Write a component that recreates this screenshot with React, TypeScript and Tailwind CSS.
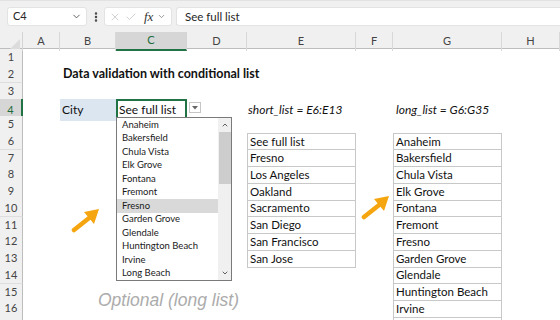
import { ChevronDown, ChevronUp, EllipsisVertical, X, Check } from "lucide-react";

const shortList = [
  "See full list",
  "Fresno",
  "Los Angeles",
  "Oakland",
  "Sacramento",
  "San Diego",
  "San Francisco",
  "San Jose",
];

// only rows 6..16 are fully visible, row 17 is cut by the window
const longList = [
  "Anaheim",
  "Bakersfield",
  "Chula Vista",
  "Elk Grove",
  "Fontana",
  "Fremont",
  "Fresno",
  "Garden Grove",
  "Glendale",
  "Huntington Beach",
  "Irvine",
  "",
];

const dropItems = [
  "Anaheim",
  "Bakersfield",
  "Chula Vista",
  "Elk Grove",
  "Fontana",
  "Fremont",
  "Fresno",
  "Garden Grove",
  "Glendale",
  "Huntington Beach",
  "Irvine",
  "Long Beach",
];

const columns = ["A", "B", "C", "D", "E", "F", "G", "H"];
const gridCols = "grid grid-cols-[23px_37px_56px_71px_60px_109px_37px_109px_1fr]";

function Toolbar() {
  return (
    <div className="h-[32px] bg-[#f0f0f0] border-t border-[#e2e2e2] flex items-center pl-[7px] text-[11px] text-[#262626]">
      <div className="w-[80px] h-[19px] bg-white rounded-[3px] border border-[#e3e3e3] flex items-center justify-between pl-[5px] pr-[4px]">
        <span>C4</span>
        <ChevronDown className="w-[11px] h-[11px] text-[#555]" strokeWidth={2} />
      </div>
      <div className="w-[17px] flex justify-center">
        <EllipsisVertical className="w-[12px] h-[12px] text-[#444]" strokeWidth={3} />
      </div>
      <div className="w-[68px] h-[19px] bg-white rounded-[3px] border border-[#e3e3e3] flex items-center pl-[4px] gap-[4px]">
        <X className="w-[12px] h-[12px] text-[#c2c2c2]" strokeWidth={1.5} />
        <Check className="w-[12px] h-[12px] text-[#c2c2c2]" strokeWidth={1.5} />
        <span className="ml-[3px] text-[13px] italic text-[#333] [font-family:'Liberation_Serif',serif] leading-none">
          fx
        </span>
        <ChevronDown className="w-[9px] h-[9px] text-[#777]" strokeWidth={2} />
      </div>
      <div className="ml-[4px] flex-1 h-[19px] bg-white rounded-l-[3px] border border-r-0 border-[#e3e3e3] flex items-center pl-[8px] text-[11.5px]">
        See full list
      </div>
    </div>
  );
}

function ColumnHeader() {
  return (
    <div className={`${gridCols} h-[17px] bg-[#f0f0f0] border-b border-[#bdbdbd] text-[11px] text-[#444]`}>
      <div className="relative border-r border-[#d4d4d4]">
        <svg className="absolute right-[2px] bottom-[2px]" width="10" height="10" viewBox="0 0 10 10">
          <polygon points="10,0 10,10 0,10" fill="#dcdcdc" />
        </svg>
      </div>
      {columns.map((c) =>
        c === "C" ? (
          <div
            key={c}
            className="bg-[#d6d6d6] border-b-2 border-[#217346] text-[#1d6b3c] flex items-center justify-center border-r border-r-[#d4d4d4]"
          >
            {c}
          </div>
        ) : (
          <div key={c} className="flex items-center justify-center border-r border-[#d8d8d8]">
            {c}
          </div>
        )
      )}
    </div>
  );
}

function boxCell(text: string | undefined, first: boolean) {
  if (text === undefined) return <div />;
  return (
    <div
      className={`border-x border-b border-[#c8c8c8] ${first ? "border-t" : ""} pl-[2px] flex items-center text-[11.5px] text-[#111] leading-none whitespace-nowrap overflow-hidden`}
    >
      {text}
    </div>
  );
}

function SheetRow({ n }: { n: number }) {
  const active = n === 4;
  const e = n >= 6 && n <= 13 ? shortList[n - 6] : undefined;
  const g = n >= 6 ? longList[n - 6] : undefined;

  return (
    <div className={`${gridCols} h-[16.75px] text-[11.5px] text-[#111]`}>
      <div
        className={`flex items-center justify-center text-[11px] border-b border-[#dedede] ${
          active
            ? "bg-[#d6d6d6] text-[#1d6b3c] border-r-2 border-r-[#217346]"
            : "bg-[#f0f0f0] text-[#444] border-r border-r-[#bdbdbd]"
        }`}
      >
        {n < 17 ? n : ""}
      </div>
      <div />
      <div className="relative overflow-visible">
        {n === 2 && (
          <span className="absolute left-[3px] top-0 h-full flex items-center font-bold text-[12.5px] whitespace-nowrap">
            Data validation with conditional list
          </span>
        )}
        {n === 4 && (
          <div className="h-full bg-[#dce6f1] flex items-center pl-[2px] text-[12px]">City</div>
        )}
      </div>
      <div>
        {n === 4 && (
          <div className="h-full border-2 border-[#217346] flex items-center pl-[1px] text-[12px] whitespace-nowrap">
            See full list
          </div>
        )}
      </div>
      <div className="relative">
        {n === 4 && (
          <div className="absolute left-[2px] top-[3px] w-[12px] h-[11px] bg-white border border-[#c6c6c6] flex items-center justify-center">
            <svg width="6" height="4" viewBox="0 0 6 4">
              <polygon points="0,0 6,0 3,3.5" fill="#666" />
            </svg>
          </div>
        )}
      </div>
      {n === 4 ? (
        <div className="relative">
          <span className="absolute left-[1px] top-0 h-full flex items-center italic text-[12px] whitespace-nowrap">
            short_list = E6:E13
          </span>
        </div>
      ) : (
        boxCell(e, n === 6)
      )}
      <div />
      {n === 4 ? (
        <div className="relative">
          <span className="absolute left-[3px] top-0 h-full flex items-center italic text-[12px] whitespace-nowrap">
            long_list = G6:G35
          </span>
        </div>
      ) : (
        boxCell(g, n === 6)
      )}
      <div />
    </div>
  );
}

function DropdownList() {
  return (
    <div className="absolute left-[116px] top-[117px] w-[116px] h-[164px] bg-white border border-[#7a7a7a] flex">
      <div className="flex-1 flex flex-col">
        {dropItems.map((it) => (
          <div
            key={it}
            className={`h-[13.5px] flex items-center pl-[5px] text-[9.5px] text-[#1a1a1a] whitespace-nowrap ${
              it === "Fresno" ? "bg-[#d9d9d9]" : ""
            }`}
          >
            {it}
          </div>
        ))}
      </div>
      <div className="w-[13px] bg-[#f0f0f0] flex flex-col items-center">
        <ChevronUp className="w-[8px] h-[8px] mt-[3px] text-[#606060]" strokeWidth={3} />
        <div className="mt-[3px] w-[12px] h-[52px] bg-[#cdcdcd]" />
        <div className="flex-1" />
        <ChevronDown className="w-[8px] h-[8px] mb-[3px] text-[#606060]" strokeWidth={3} />
      </div>
    </div>
  );
}

function Arrow({ className }: { className: string }) {
  return (
    <svg className={className} width="30" height="26" viewBox="0 0 30 26">
      <line x1="3" y1="23" x2="20" y2="9.5" stroke="#f5a50f" strokeWidth="4.5" strokeLinecap="round" />
      <polygon points="28,2 13,5 23,17" fill="#f5a50f" />
    </svg>
  );
}

export default function App() {
  return (
    <div className="relative w-[560px] h-[320px] overflow-hidden bg-white [font-family:'Lato','Noto_Sans',sans-serif]">
      <Toolbar />
      <ColumnHeader />
      <div>
        {Array.from({ length: 17 }, (_, i) => (
          <SheetRow key={i} n={i + 1} />
        ))}
      </div>
      <DropdownList />
      <Arrow className="absolute left-[71px] top-[207px]" />
      <Arrow className="absolute left-[361px] top-[194px]" />
      <div className="absolute left-[98px] top-[287px] text-[17.5px] italic text-[#acacac] [font-family:'Liberation_Sans',sans-serif] whitespace-nowrap">
        Optional (long list)
      </div>
    </div>
  );
}
